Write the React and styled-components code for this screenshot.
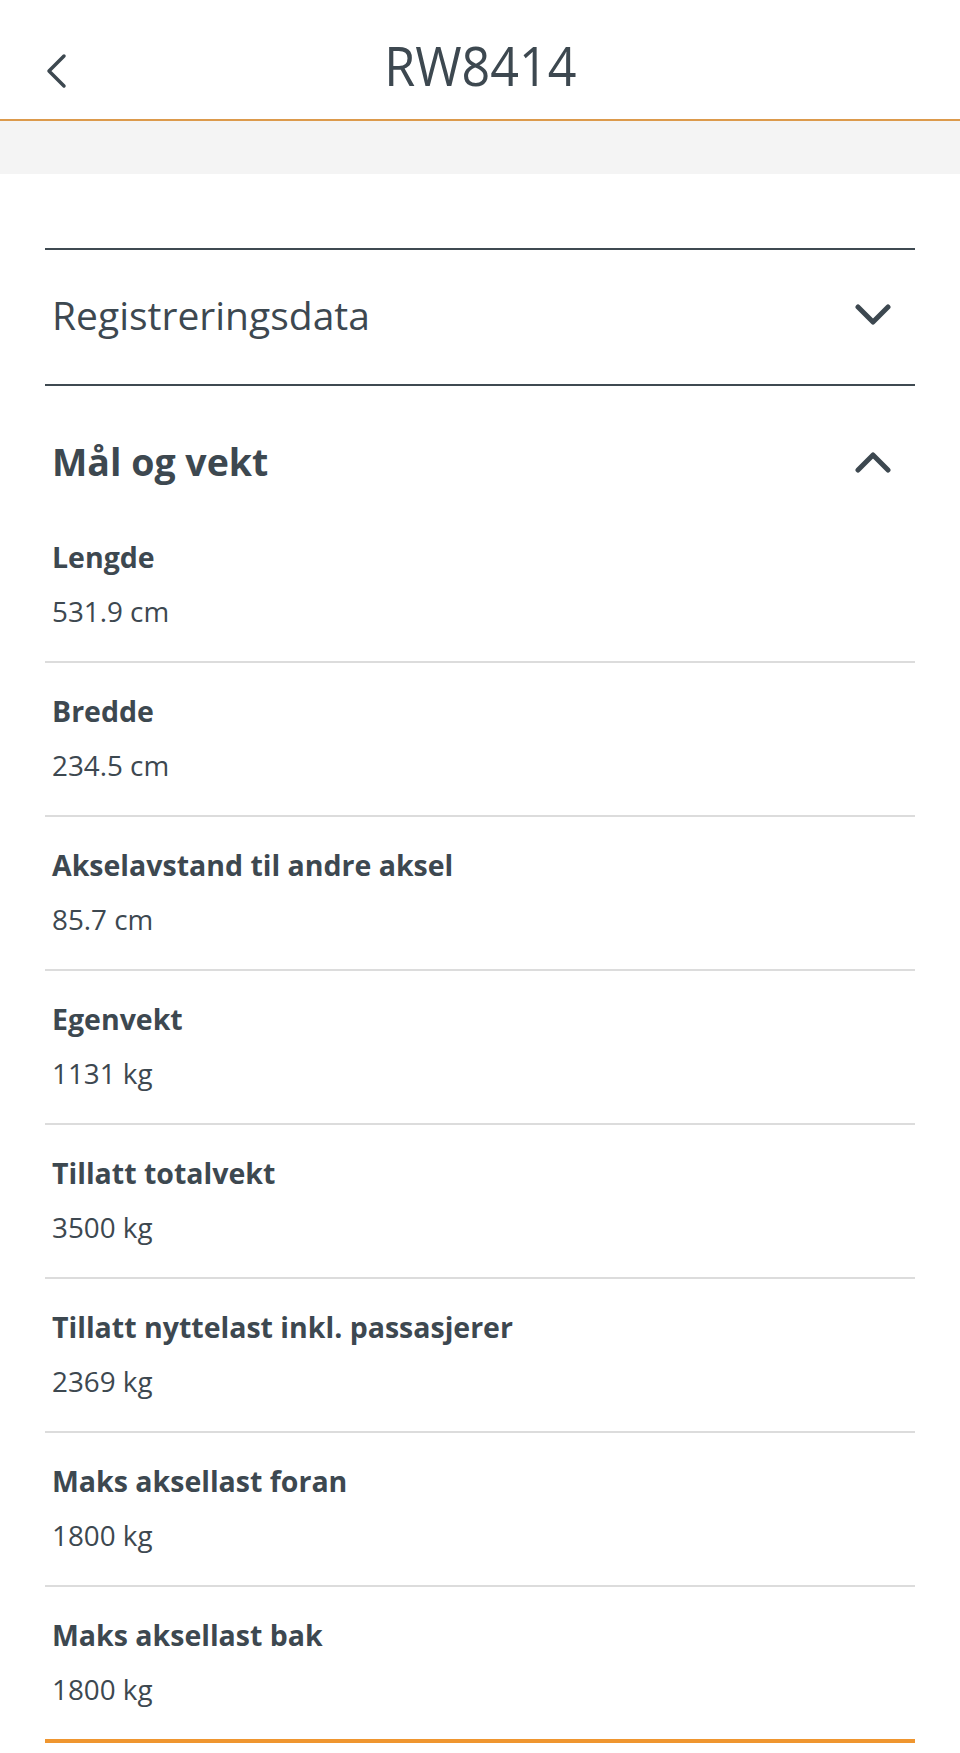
import styled, { createGlobalStyle } from "styled-components";

const GlobalStyle = createGlobalStyle`
  html, body {
    margin: 0;
    padding: 0;
    background: #ffffff;
  }
  body {
    font-family: "Open Sans", "Liberation Sans", sans-serif;
    color: #3d4850;
  }
`;

const Page = styled.div`
  width: 960px;
  min-height: 1753px;
  background: #ffffff;
`;

const TopBar = styled.header`
  height: 121px;
  padding-top: 10px;
  box-sizing: border-box;
  display: grid;
  grid-template-columns: 1fr auto 1fr;
  align-items: center;
  border-bottom: 2px solid #dc9a4c;
`;

const BackButton = styled.button`
  justify-self: start;
  margin-left: 44px;
  margin-top: 12px;
  padding: 0;
  border: none;
  background: none;
  display: flex;
  color: #3d4850;
`;

const Title = styled.h1`
  margin: 0;
  font-size: 54px;
  line-height: 54px;
  font-weight: 400;
  color: #3d4850;
  transform: scaleX(0.93);
`;

const Band = styled.div`
  height: 53px;
  background: #f4f4f4;
`;

const Content = styled.main`
  padding: 74px 45px 0;
`;

const Section = styled.section`
  border-top: 2px solid #3f4a51;
  border-bottom: ${({ $open }) => ($open ? "4px solid #ef9630" : "none")};
`;

const SectionHead = styled.div`
  display: flex;
  align-items: center;
  justify-content: space-between;
  padding: ${({ $open }) => ($open ? "52px 24px 23px 7px" : "0 24px 4px 7px")};
  height: ${({ $open }) => ($open ? "auto" : "134px")};
  box-sizing: border-box;
`;

const SectionTitle = styled.h2`
  margin: 0;
  font-size: ${({ $open }) => ($open ? "37.5px" : "39px")};
  line-height: 48px;
  font-weight: ${({ $open }) => ($open ? 700 : 400)};
  color: #3d4850;
`;

const Row = styled.div`
  display: flex;
  flex-direction: column;
  gap: 18px;
  padding: 30px 7px 32px;
  border-bottom: 2px solid #dcdcdc;

  &:last-child {
    border-bottom: none;
  }
`;

const Label = styled.div`
  font-size: 28.5px;
  line-height: 36px;
  font-weight: 700;
`;

const Value = styled.div`
  font-size: 27.8px;
  line-height: 36px;
  font-weight: 400;
`;

const Chevron = ({ up }) => (
  <svg width="36" height="22" viewBox="0 0 36 22" fill="none">
    <polyline
      points={up ? "3,19 18,4 33,19" : "3,3 18,18 33,3"}
      stroke="#3d4850"
      strokeWidth="5"
      strokeLinecap="round"
      strokeLinejoin="round"
    />
  </svg>
);

const BackIcon = () => (
  <svg width="24" height="36" viewBox="0 0 24 36" fill="none">
    <polyline
      points="20,3 5,18 20,33"
      stroke="#3d4850"
      strokeWidth="3.5"
      strokeLinecap="round"
      strokeLinejoin="round"
    />
  </svg>
);

const rows = [
  ["Lengde", "531.9 cm"],
  ["Bredde", "234.5 cm"],
  ["Akselavstand til andre aksel", "85.7 cm"],
  ["Egenvekt", "1131 kg"],
  ["Tillatt totalvekt", "3500 kg"],
  ["Tillatt nyttelast inkl. passasjerer", "2369 kg"],
  ["Maks aksellast foran", "1800 kg"],
  ["Maks aksellast bak", "1800 kg"],
];

export default function App() {
  return (
    <Page>
      <GlobalStyle />
      <TopBar>
        <BackButton aria-label="Tilbake">
          <BackIcon />
        </BackButton>
        <Title>RW8414</Title>
        <span />
      </TopBar>
      <Band />
      <Content>
        <Section>
          <SectionHead>
            <SectionTitle>Registreringsdata</SectionTitle>
            <Chevron />
          </SectionHead>
        </Section>
        <Section $open>
          <SectionHead $open>
            <SectionTitle $open>Mål og vekt</SectionTitle>
            <Chevron up />
          </SectionHead>
          {rows.map(([label, value]) => (
            <Row key={label}>
              <Label>{label}</Label>
              <Value>{value}</Value>
            </Row>
          ))}
        </Section>
      </Content>
    </Page>
  );
}
